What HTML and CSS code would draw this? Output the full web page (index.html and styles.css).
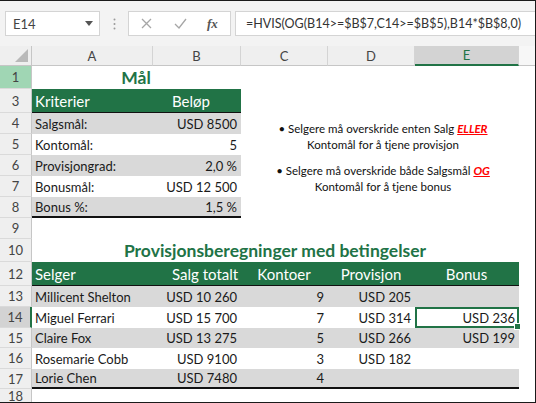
FILE: index.html
```html
<!DOCTYPE html>
<html lang="nb">
<head>
    <meta charset="UTF-8">
    <title>Provisjonsberegninger</title>
    <link rel="stylesheet" href="styles.css">
</head>
<body>
    <div class="window">
        <div class="formula-bar">
            <div class="name-box">
                <span>E14</span>
                <svg class="dropdown" width="8" height="5" viewBox="0 0 8 5"><polygon points="0,0 8,0 4,5" fill="#555"/></svg>
            </div>
            <svg class="grip" width="3" height="12" viewBox="0 0 3 12"><circle cx="1.5" cy="1.5" r="1" fill="#9a9a9a"/><circle cx="1.5" cy="6" r="1" fill="#9a9a9a"/><circle cx="1.5" cy="10.5" r="1" fill="#9a9a9a"/></svg>
            <div class="fx-buttons">
                <svg class="btn-cancel" width="11" height="11" viewBox="0 0 11 11"><path d="M1 1 L10 10 M10 1 L1 10" stroke="#a6a6a6" stroke-width="1.3"/></svg>
                <svg class="btn-enter" width="13" height="11" viewBox="0 0 13 11"><path d="M1 6 L5 10 L12 1" stroke="#a6a6a6" stroke-width="1.3" fill="none"/></svg>
                <span class="fx">fx</span>
            </div>
            <div class="formula">=HVIS(OG(B14&gt;=$B$7,C14&gt;=$B$5),B14*$B$8,0)</div>
        </div>

        <div class="sheet">
            <div class="row row-head">
                <div class="corner"><svg width="13" height="13" viewBox="0 0 13 13"><polygon points="13,0 13,13 0,13" fill="#b9b9b9"/></svg></div>
                <div class="col-head">A</div>
                <div class="col-head">B</div>
                <div class="col-head">C</div>
                <div class="col-head">D</div>
                <div class="col-head active">E</div>
                <div class="col-head rest"></div>
            </div>

            <div class="row h23">
                <div class="row-num lit">1</div>
                <div class="cell title span-2">Mål</div>
            </div>
            <div class="row h24">
                <div class="row-num">3</div>
                <div class="cell th">Kriterier</div>
                <div class="cell th indent">Beløp</div>
            </div>
            <div class="row h21">
                <div class="row-num">4</div>
                <div class="cell band">Salgsmål:</div>
                <div class="cell band num">USD 8500</div>
            </div>
            <div class="row h21">
                <div class="row-num">5</div>
                <div class="cell">Kontomål:</div>
                <div class="cell num">5</div>
            </div>
            <div class="row h21">
                <div class="row-num">6</div>
                <div class="cell band">Provisjongrad:</div>
                <div class="cell band num">2,0 %</div>
            </div>
            <div class="row h21">
                <div class="row-num">7</div>
                <div class="cell">Bonusmål:</div>
                <div class="cell num">USD 12 500</div>
            </div>
            <div class="row h21">
                <div class="row-num">8</div>
                <div class="cell band last">Bonus %:</div>
                <div class="cell band num last">1,5 %</div>
            </div>
            <div class="row h21">
                <div class="row-num">9</div>
            </div>
            <div class="row h23">
                <div class="row-num">10</div>
                <div class="cell title span-5">Provisjonsberegninger med betingelser</div>
            </div>
            <div class="row h24">
                <div class="row-num">12</div>
                <div class="cell th">Selger</div>
                <div class="cell th indent">Salg totalt</div>
                <div class="cell th center">Kontoer</div>
                <div class="cell th center">Provisjon</div>
                <div class="cell th center">Bonus</div>
            </div>
            <div class="row h21">
                <div class="row-num">13</div>
                <div class="cell band">Millicent Shelton</div>
                <div class="cell band num">USD 10 260</div>
                <div class="cell band num">9</div>
                <div class="cell band num">USD 205</div>
                <div class="cell band num"></div>
            </div>
            <div class="row h21">
                <div class="row-num current">14</div>
                <div class="cell">Miguel Ferrari</div>
                <div class="cell num">USD 15 700</div>
                <div class="cell num">7</div>
                <div class="cell num">USD 314</div>
                <div class="cell num selected">USD 236</div>
            </div>
            <div class="row h20">
                <div class="row-num">15</div>
                <div class="cell band">Claire Fox</div>
                <div class="cell band num">USD 13 275</div>
                <div class="cell band num">5</div>
                <div class="cell band num">USD 266</div>
                <div class="cell band num">USD 199</div>
            </div>
            <div class="row h21">
                <div class="row-num">16</div>
                <div class="cell">Rosemarie Cobb</div>
                <div class="cell num">USD 9100</div>
                <div class="cell num">3</div>
                <div class="cell num">USD 182</div>
                <div class="cell num"></div>
            </div>
            <div class="row h20">
                <div class="row-num">17</div>
                <div class="cell band last">Lorie Chen</div>
                <div class="cell band num last">USD 7480</div>
                <div class="cell band num last">4</div>
                <div class="cell band num last"></div>
                <div class="cell band num last"></div>
            </div>
            <div class="row h-rest">
                <div class="row-num low">18</div>
            </div>

            <div class="note">
                <p>• Selgere må overskride enten Salg <em>ELLER</em><br>Kontomål for å tjene provisjon</p>
                <p>• Selgere må overskride både Salgsmål <em>OG</em><br>Kontomål for å tjene bonus</p>
            </div>
        </div>
    </div>
</body>
</html>
```

FILE: styles.css
```css
body {
    margin: 0;
    padding: 0;
    font-family: 'Lato', 'Liberation Sans', sans-serif;
    background-color: #fff;
}

.window {
    width: 536px;
    height: 403px;
    box-sizing: border-box;
    border: 1px solid #1a1a1a;
    border-left: none;
    overflow: hidden;
    display: flex;
    flex-direction: column;
}

/* formula bar */
.formula-bar {
    height: 45px;
    flex: none;
    background-color: #f3f3f3;
    display: flex;
    align-items: center;
    padding-left: 5px;
}

.name-box {
    width: 95px;
    height: 25px;
    box-sizing: border-box;
    background-color: #fff;
    border: 1px solid #d4d4d4;
    display: flex;
    align-items: center;
    justify-content: space-between;
    padding: 0 6px 0 7px;
    font-size: 13px;
    color: #444;
}

.grip {
    margin: 0 12px 0 13px;
}

.fx-buttons {
    width: 103px;
    height: 25px;
    box-sizing: border-box;
    background-color: #fff;
    border: 1px solid #d4d4d4;
    display: flex;
    align-items: center;
    padding-left: 12px;
}

.btn-cancel {
    margin-right: 22px;
}

.btn-enter {
    margin-right: 20px;
}

.fx {
    font-family: 'Liberation Serif', serif;
    font-style: italic;
    font-weight: bold;
    font-size: 13px;
    color: #555;
}

.formula {
    flex: 1;
    height: 25px;
    margin-left: 4px;
    box-sizing: border-box;
    background-color: #fff;
    border: 1px solid #d4d4d4;
    border-right: none;
    display: flex;
    align-items: center;
    padding-left: 10px;
    font-size: 12.5px;
    color: #333;
    white-space: nowrap;
}

/* sheet grid */
.sheet {
    position: relative;
    flex: 1;
}

.row {
    display: grid;
    grid-template-columns: 32px 121px 88px 87px 87px 104px 1fr;
}

.row-head { height: 20px; }
.h20 { height: 20px; }
.h21 { height: 21px; }
.h23 { height: 23px; }
.h24 { height: 24px; }
.h-rest { height: 13px; }

.corner {
    background-color: #efefef;
    border-right: 1px solid #c6c6c6;
    border-bottom: 1px solid #c6c6c6;
    display: flex;
    align-items: flex-end;
    justify-content: flex-end;
    padding: 0 3px 3px 0;
}

.col-head {
    background-color: #efefef;
    border-right: 1px solid #d4d4d4;
    border-bottom: 1px solid #c6c6c6;
    display: flex;
    align-items: center;
    justify-content: center;
    font-size: 13px;
    color: #444;
}

.col-head.active {
    background-color: #d3d3d3;
    border-bottom: 2px solid #217346;
    color: #217346;
}

.col-head.rest {
    background-color: #f7f7f7;
    border-right: none;
}

.row-num {
    grid-column: 1;
    background-color: #efefef;
    border-right: 1px solid #c6c6c6;
    border-bottom: 1px solid #dadada;
    display: flex;
    align-items: center;
    justify-content: center;
    font-size: 13px;
    color: #444;
}

.row-num.low {
    align-items: flex-start;
    line-height: 15px;
}

.row-num.lit {
    background-color: #a0d6b4;
}

.row-num.current {
    background-color: #d3d3d3;
    border-right: 2px solid #217346;
}

.cell {
    box-sizing: border-box;
    display: flex;
    align-items: center;
    padding: 0 4px 0 3px;
    font-size: 13px;
    color: #1a1a1a;
    white-space: nowrap;
    overflow: hidden;
}

.band {
    background-color: #d9d9d9;
}

.num {
    justify-content: flex-end;
}

.center {
    justify-content: center;
}

.last {
    border-bottom: 2px solid #111;
}

.title {
    justify-content: center;
    font-size: 17.5px;
    font-weight: bold;
    color: #217346;
}

.span-2 { grid-column: 2 / span 2; }
.span-5 { grid-column: 2 / span 5; }

.th {
    background-color: #217346;
    border-bottom: 1px solid #111;
    color: #fff;
    font-size: 15px;
}

.th.indent {
    padding-left: 19px;
}

.selected {
    position: relative;
    border: 2px solid #217346;
    padding-right: 2px;
    overflow: visible;
}

.selected::after {
    content: '';
    position: absolute;
    right: -4px;
    bottom: -4px;
    width: 5px;
    height: 5px;
    background-color: #217346;
    border: 1px solid #fff;
}

/* floating text box */
.note {
    position: absolute;
    left: 258px;
    top: 75px;
    width: 250px;
    text-align: center;
    font-size: 11.5px;
    line-height: 16px;
    color: #111;
}

.note p {
    margin: 0 0 10px 0;
}

.note em {
    color: #ff0000;
    font-weight: bold;
    text-decoration: underline;
}
```
